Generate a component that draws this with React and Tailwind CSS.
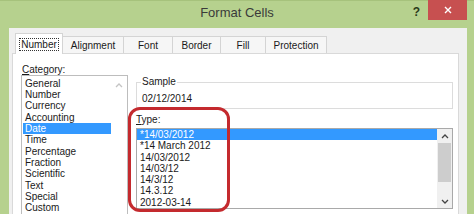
import React from 'react';

const tabs = [
  { label: 'Number', w: 'w-[48px]' },
  { label: 'Alignment', w: 'w-[61px]' },
  { label: 'Font', w: 'w-[49px]' },
  { label: 'Border', w: 'w-[48px]' },
  { label: 'Fill', w: 'w-[45px]' },
  { label: 'Protection', w: 'w-[61px]' },
];

const categories = ['General', 'Number', 'Currency', 'Accounting', 'Date', 'Time', 'Percentage', 'Fraction', 'Scientific', 'Text', 'Special', 'Custom'];
const types = ['*14/03/2012', '*14 March 2012', '14/03/2012', '14/03/12', '14/3/12', '14.3.12', '2012-03-14'];

function Chevron({ down = false, color = '#555' }) {
  return (
    <svg width="8" height="5" viewBox="0 0 8 5">
      <polyline
        points={down ? '1,1 4,4 7,1' : '1,4 4,1 7,4'}
        fill="none"
        stroke={color}
        strokeWidth="1.3"
      />
    </svg>
  );
}

export default function App() {
  return (
    <div className="relative flex h-[214px] w-[474px] flex-col overflow-hidden bg-[#b6d18e] font-['Liberation_Sans',Arial,sans-serif] text-[10px] text-[#1a1a1a]">
      {/* title bar */}
      <div className="grid h-[28px] shrink-0 grid-cols-[1fr_auto_1fr] shadow-[inset_0_1px_0_#a6c27c]">
        <div />
        <div className="pt-[5px] text-[13px] leading-[16px] text-[#3a3a3a]">Format Cells</div>
        <div className="flex items-start justify-end pr-[7px]">
          <span className="mr-[8px] mt-[5px] text-[12px] font-bold leading-[14px] text-[#2a3a1a]">?</span>
          <button className="flex h-[20px] w-[39px] items-center justify-center bg-[#c75050]">
            <svg width="8" height="8" viewBox="0 0 8 8">
              <path d="M1 1L7 7M7 1L1 7" stroke="#fff" strokeWidth="1.4" />
            </svg>
          </button>
        </div>
      </div>

      {/* dialog body */}
      <div className="ml-[9px] mr-[7px] flex flex-1 flex-col bg-[#f0f0f0] pl-[3px] pr-[8px] pt-[5px]">
        <div className="flex h-[20px] shrink-0 items-end pl-[3px]">
          {tabs.map((tab, i) =>
            i === 0 ? (
              <div
                key={tab.label}
                className={`relative z-10 -mb-px flex h-[21px] ${tab.w} items-center justify-center border border-b-0 border-[#d4d4d4] bg-white`}
              >
                <span className="border border-dotted border-[#333] px-[1px] leading-[11px]">{tab.label}</span>
              </div>
            ) : (
              <div
                key={tab.label}
                className={`flex h-[17px] ${tab.w} items-center justify-center border-r border-t border-[#d4d4d4] bg-[#f6f6f6] leading-[11px]`}
              >
                {tab.label}
              </div>
            )
          )}
        </div>

        <div className="flex flex-1 gap-[8px] border border-b-0 border-[#d9d9d9] bg-white pl-[8px] pr-[5px] pt-[10px]">
          {/* category */}
          <div className="flex w-[107px] flex-col">
            <div className="pl-[1px] leading-[11px]">
              <span className="underline">C</span>ategory:
            </div>
            <div className="flex flex-1 border border-b-0 border-[#bdbdbd]">
              <div className="flex-1 pl-[1px] pt-[1.5px]">
                {categories.map((c) => (
                  <div
                    key={c}
                    className={`h-[11.36px] pl-[2px] leading-[11.36px] ${c === 'Date' ? 'bg-[#3399ff] text-white' : ''}`}
                  >
                    {c}
                  </div>
                ))}
              </div>
              <div className="flex w-[16px] justify-center pt-[7px]">
                <div className="h-[5px]">
                  <Chevron color="#c4c4c4" />
                </div>
              </div>
            </div>
          </div>

          {/* sample + type */}
          <div className="flex flex-1 flex-col">
            <fieldset className="mt-[12px] border border-[#dcdcdc] pb-[3px] pl-[4px]">
              <legend className="px-[1px] leading-[12px]">Sample</legend>
              <div className="pl-[1px] pt-[5px] leading-[12px]">02/12/2014</div>
            </fieldset>
            <div className="mt-[5px] leading-[12px]">
              <span className="underline">T</span>ype:
            </div>
            <div className="mt-[2px] flex h-[81px] border border-[#a9a9a9]">
              <div className="flex-1">
                {types.map((t, i) => (
                  <div
                    key={t}
                    className={`h-[11.3px] pl-[3px] leading-[11.3px] ${i === 0 ? 'bg-[#3399ff] text-white' : ''}`}
                  >
                    {t}
                  </div>
                ))}
              </div>
              <div className="flex w-[15px] flex-col bg-[#f0f0f0]">
                <div className="flex h-[14px] items-center justify-center">
                  <Chevron color="#444" />
                </div>
                <div className="mx-[1px] h-[39px] bg-[#cdcdcd]" />
                <div className="flex-1" />
                <div className="flex h-[14px] items-center justify-center">
                  <Chevron down color="#444" />
                </div>
              </div>
            </div>
          </div>
        </div>
      </div>

      {/* red annotation */}
      <div className="absolute left-[128px] top-[107px] h-[105px] w-[102px] rounded-[12px] border-[3px] border-[#c42a2e]" />
    </div>
  );
}
